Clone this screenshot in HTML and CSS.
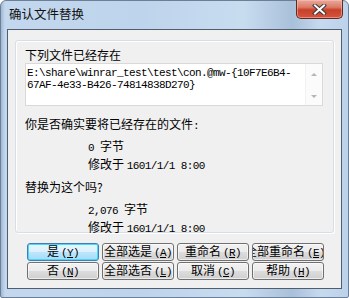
FILE: index.html
```html
<!DOCTYPE html>
<html lang="zh-CN">

<head>
  <meta charset="UTF-8">
  <title>确认文件替换</title>
  <link rel="stylesheet" href="styles.css">
</head>

<body>
  <div class="window">
    <div class="titlebar">
      <span class="title">确认文件替换</span>
      <div class="close">
        <svg width="17" height="11" viewBox="0 0 17 11">
          <path d="M4 1.5 L13 9.5 M13 1.5 L4 9.5" stroke="#3a3a3a" stroke-width="4" stroke-linecap="square"/>
          <path d="M4 1.5 L13 9.5 M13 1.5 L4 9.5" stroke="#fff" stroke-width="2" stroke-linecap="square"/>
        </svg>
      </div>
    </div>

    <div class="client">
      <div class="group">
        <div class="label">下列文件已经存在</div>
        <div class="filebox">
          <div class="path">E:\share\winrar_test\test\con.@mw-{10F7E6B4-<br>67AF-4e33-B426-74814838D270}</div>
          <div class="scroll">
            <span class="arrow up"></span>
            <span class="arrow down"></span>
          </div>
        </div>

        <p class="question">你是否确实要将已经存在的文件<span class="mono">:</span></p>
        <div class="details first">
          <p><span class="mono">0 </span>字节</p>
          <p>修改于 <span class="mono">1601/1/1 8:00</span></p>
        </div>

        <p class="question second">替换为这个吗?</p>
        <div class="details third">
          <p><span class="mono">2,076 </span>字节</p>
          <p>修改于 <span class="mono">1601/1/1 8:00</span></p>
        </div>
      </div>

      <div class="buttons">
        <button class="btn default"><span>是<span class="mono key">(<u>Y</u>)</span></span></button>
        <button class="btn"><span>全部选是<span class="mono key">(<u>A</u>)</span></span></button>
        <button class="btn"><span>重命名<span class="mono key">(<u>R</u>)</span></span></button>
        <button class="btn wide"><span>全部重命名<span class="mono key">(<u>E</u>)</span></span></button>
        <button class="btn"><span>否<span class="mono key">(<u>N</u>)</span></span></button>
        <button class="btn"><span>全部选否<span class="mono key">(<u>L</u>)</span></span></button>
        <button class="btn"><span>取消<span class="mono key">(<u>C</u>)</span></span></button>
        <button class="btn"><span>帮助<span class="mono key">(<u>H</u>)</span></span></button>
      </div>
    </div>
  </div>
</body>

</html>
```

FILE: styles.css
```css
/* Reset styles */
* {
  margin: 0;
  padding: 0;
  box-sizing: border-box;
}

body {
  font-family: "Noto Sans CJK SC", sans-serif;
  font-size: 12px;
  color: #000;
  background-color: #fff;
}

/* SimSun-like half width latin: 6px per char */
.mono {
  font-family: "Liberation Mono", monospace;
  font-size: 11px;
  letter-spacing: -0.6px;
}

/* Window frame */
.window {
  width: 349px;
  height: 298px;
  border: 1px solid #6d7f95;
  border-radius: 6px 6px 2px 2px;
  background: linear-gradient(90deg, #9fb8d3 0px, #c3d8ee 4px, #bed4ec 40%, #c8dcf0 70%, #a9c0da 84%, #c6daef 92%, #bcd2ea 100%);
  display: flex;
  flex-direction: column;
  padding: 0 6px 8px 6px;
}

.titlebar {
  height: 28px;
  display: flex;
  align-items: flex-start;
  justify-content: space-between;
}

.title {
  margin-top: 5px;
  margin-left: 2px;
  line-height: 16px;
  font-size: 12.5px;
  color: #111;
}

.close {
  width: 47px;
  height: 19px;
  margin-right: -1px;
  margin-top: -1px;
  border: 1px solid #5e2b23;
  border-top: none;
  border-radius: 0 0 5px 5px;
  background: linear-gradient(180deg, #e9a99c 0%, #dc7b66 40%, #c8402a 55%, #d5543c 100%);
  box-shadow: inset 0 0 0 1px rgba(255, 200, 190, 0.5);
  display: flex;
  align-items: center;
  justify-content: center;
}

/* Client area */
.client {
  flex: 1;
  border: 1px solid #4f5d6d;
  background-color: #f0f0f0;
  padding: 10px 7px 0 7px;
}

.group {
  border: 1px solid #d5dfe5;
  border-radius: 3px;
  box-shadow: inset 1px 1px 0 #fff, 1px 1px 0 #fff;
  padding: 6px 10px 9px 9px;
  height: 193px;
}

.label {
  line-height: 15px;
  margin-bottom: 1px;
}

.filebox {
  height: 43px;
  border: 1px solid #d9d9d9;
  background-color: #fff;
  display: flex;
  justify-content: space-between;
}

.path {
  font-family: "Liberation Mono", monospace;
  font-size: 11px;
  letter-spacing: -0.6px;
  line-height: 12px;
  padding: 3px 0 0 1px;
  white-space: nowrap;
}

.scroll {
  width: 17px;
  border-left: 1px solid #f2f2f2;
  background-color: #fbfbfb;
  display: flex;
  flex-direction: column;
  justify-content: space-between;
  align-items: center;
  padding: 9px 0 7px 0;
}

.arrow {
  width: 0;
  height: 0;
  border-left: 3px solid transparent;
  border-right: 3px solid transparent;
}

.arrow.up {
  border-bottom: 3px solid #b5b5b5;
}

.arrow.down {
  border-top: 3px solid #b5b5b5;
}

.question {
  line-height: 15px;
  margin-top: 10px;
}

.question.second {
  margin-top: 5px;
}

.details {
  padding-left: 63px;
  margin-top: 4px;
}

.details.third {
  margin-top: 7px;
}

.details p {
  line-height: 15px;
}

/* Buttons */
.buttons {
  display: grid;
  grid-template-columns: repeat(4, 72px);
  column-gap: 3px;
  row-gap: 1px;
  margin: 10px 0 0 12px;
}

.btn {
  height: 18px;
  border: 1px solid #707070;
  border-radius: 3px;
  background: linear-gradient(180deg, #f2f2f2 0%, #ebebeb 50%, #dddddd 51%, #cfcfcf 100%);
  box-shadow: inset 0 0 0 1px rgba(255, 255, 255, 0.6);
  font-family: "Noto Sans CJK SC", sans-serif;
  font-size: 12px;
  line-height: 14px;
  color: #000;
  display: flex;
  justify-content: center;
  align-items: center;
  overflow: hidden;
  white-space: nowrap;
}

.btn > span {
  flex-shrink: 0;
}

/* label is wider than the button, clipped on both sides */
.btn.wide > span {
  margin-left: -6px;
}

.key {
  margin-left: 2px;
}

.btn.default {
  border-color: #3c7fb1;
  background: linear-gradient(180deg, #eaf6fd 0%, #d9f0fc 50%, #bee6fd 51%, #a7d9f5 100%);
  box-shadow: inset 0 0 0 1px #48d8fb;
}
```
